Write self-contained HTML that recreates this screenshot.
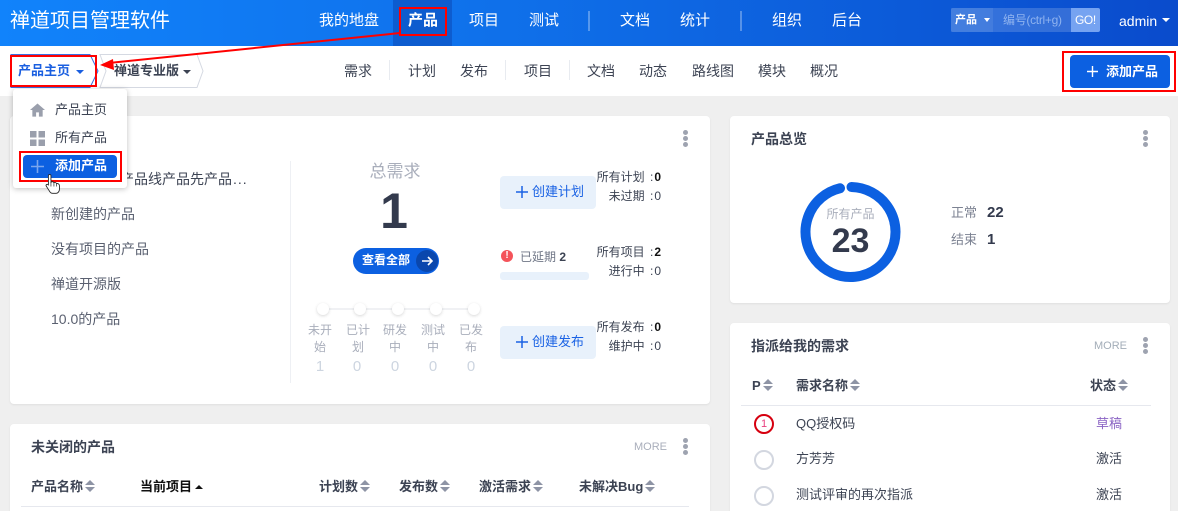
<!DOCTYPE html>
<html lang="zh">
<head>
<meta charset="utf-8">
<title>禅道项目管理软件</title>
<style>
html,body{margin:0;padding:0;width:1178px;height:511px;overflow:hidden}
body{position:relative;background:#efefef;font-family:"Liberation Sans","Noto Sans CJK SC",sans-serif;font-size:13px;color:#3c4353}
.a,.t{position:absolute}
.t{white-space:nowrap;line-height:20px;height:20px}
.c{text-align:center}
.r{text-align:right}
.card{position:absolute;background:#fff;border-radius:4px;box-shadow:0 1px 2px rgba(0,0,0,.07)}
.nav{color:#fff;font-size:15px}
.sub{color:#3c4353;font-size:14px}
.sep{position:absolute;width:1px;background:#e8ebf0}
.hsep{position:absolute;width:2px;height:20px;background:rgba(255,255,255,.3);top:11px}
.dots{position:absolute;width:4px;height:16px}
.dots i{display:block;width:5px;height:5px;border-radius:50%;background:#9ea3b0;margin-bottom:1px}
.rb{position:absolute;border:2px solid #f00;box-sizing:border-box}
.b{font-weight:bold}
.sort{display:inline-block;width:10px;height:12px;position:relative;vertical-align:-1px;margin-left:2px}
.sort:before{content:"";position:absolute;left:0;top:0;border-left:5px solid transparent;border-right:5px solid transparent;border-bottom:5px solid #8e94a5}
.sort:after{content:"";position:absolute;left:0;bottom:0;border-left:5px solid transparent;border-right:5px solid transparent;border-top:5px solid #8e94a5}
.gray{color:#a9aebb}
.light{color:#cdd5e0}
.btn{position:absolute;background:#e8f1fb;border-radius:4px;height:33px;width:96px;left:500px}
.btxt{position:absolute;color:#1a62e4;font-size:13px;line-height:20px;white-space:nowrap;left:532px}
.pc{position:absolute;width:16px;height:16px;border:2px solid #d3d7e0;border-radius:50%;left:754px}
.dot{position:absolute;width:12px;height:12px;border-radius:50%;background:#fff;box-shadow:0 1px 3px rgba(0,0,0,.16);top:303px}
.left{font-size:14px;color:#5a6070}
.st{left:580px;width:81px;font-size:12px;color:#3c4353;word-spacing:2px}
</style>
</head>
<body>
<!-- header -->
<div class="a" style="left:0;top:0;width:1178px;height:46px;background:linear-gradient(90deg,#1183fb 0%,#0f6fe9 45%,#0a4bcc 100%)"></div>
<div class="a" style="left:393px;top:0;width:59px;height:46px;background:#0d5ccf"></div>
<div class="t" style="left:10px;top:8px;font-size:20px;line-height:26px;height:26px;color:#fff">禅道项目管理软件</div>
<div class="t nav" style="left:319px;top:11px">我的地盘</div>
<div class="t nav b" style="left:408px;top:11px">产品</div>
<div class="t nav" style="left:469px;top:11px">项目</div>
<div class="t nav" style="left:529px;top:11px">测试</div>
<div class="hsep" style="left:588px"></div>
<div class="t nav" style="left:620px;top:11px">文档</div>
<div class="t nav" style="left:680px;top:11px">统计</div>
<div class="hsep" style="left:740px"></div>
<div class="t nav" style="left:772px;top:11px">组织</div>
<div class="t nav" style="left:832px;top:11px">后台</div>
<div class="a" style="left:951px;top:8px;width:120px;height:24px;background:rgba(255,255,255,.17);border-radius:2px 0 0 2px"></div>
<div class="a" style="left:1071px;top:8px;width:29px;height:24px;background:#76a3f1;border-radius:0 2px 2px 0"></div>
<div class="a" style="left:951px;top:8px;width:42px;height:24px;background:rgba(255,255,255,.08)"></div>
<div class="t b" style="left:955px;top:10px;font-size:11px;color:#fff">产品</div>
<div class="a" style="left:984px;top:18px;border-left:3.5px solid transparent;border-right:3.5px solid transparent;border-top:4px solid #fff"></div>
<div class="t" style="left:1003px;top:10px;font-size:12px;color:#8fb3ef;letter-spacing:-.3px">编号(ctrl+g)</div>
<div class="t" style="left:1075px;top:10px;font-size:12px;color:#fff;letter-spacing:-.4px">GO!</div>
<div class="t" style="left:1119px;top:11px;font-size:14px;color:#fff">admin</div>
<div class="a" style="left:1162px;top:18px;border-left:4px solid transparent;border-right:4px solid transparent;border-top:4px solid #fff"></div>

<!-- subnav -->
<div class="a" style="left:0;top:46px;width:1178px;height:50px;background:#fff"></div>
<svg class="a" style="left:10px;top:54px" width="200" height="35">
<path d="M1 .5H80L88 17 80 33.500H1z" fill="#fff" stroke="#3a6fe0"/>
<path d="M90 .5H187L193 17 187 33.500H90L96 17z" fill="#fff" stroke="#d5d9e2"/>
</svg>
<div class="t b" style="left:18px;top:61px;font-size:13px;color:#1a5fe0">产品主页</div>
<div class="a" style="left:76px;top:70px;border-left:4px solid transparent;border-right:4px solid transparent;border-top:4px solid #1a5fe0"></div>
<div class="t b" style="left:114px;top:61px;font-size:13px;color:#3c4353">禅道专业版</div>
<div class="a" style="left:183px;top:70px;border-left:4px solid transparent;border-right:4px solid transparent;border-top:4px solid #3c4353"></div>
<div class="t sub" style="left:344px;top:61px">需求</div>
<div class="sep" style="left:389px;top:60px;height:20px"></div>
<div class="t sub" style="left:408px;top:61px">计划</div>
<div class="t sub" style="left:460px;top:61px">发布</div>
<div class="sep" style="left:505px;top:60px;height:20px"></div>
<div class="t sub" style="left:524px;top:61px">项目</div>
<div class="sep" style="left:569px;top:60px;height:20px"></div>
<div class="t sub" style="left:587px;top:61px">文档</div>
<div class="t sub" style="left:639px;top:61px">动态</div>
<div class="t sub" style="left:692px;top:61px">路线图</div>
<div class="t sub" style="left:758px;top:61px">模块</div>
<div class="t sub" style="left:810px;top:61px">概况</div>
<div class="a" style="left:1070px;top:55px;width:100px;height:33px;background:#0c60e1;border-radius:4px"></div>
<svg class="a" style="left:1087px;top:66px" width="11" height="11"><path d="M5.500 0V11M0 5.500H11" stroke="#fff" stroke-width="1.400"/></svg>
<div class="t b" style="left:1106px;top:62px;font-size:13px;color:#fff">添加产品</div>

<!-- left card -->
<div class="card" style="left:10px;top:116px;width:700px;height:288px"></div>
<div class="dots" style="left:683px;top:130px"><i></i><i></i><i></i></div>
<div class="t" style="left:120px;top:169px;font-size:14px;color:#3c4353">产品线产品先产品<span style="letter-spacing:1px;margin-left:1px">...</span></div>
<div class="t left" style="left:51px;top:204px">新创建的产品</div>
<div class="t left" style="left:51px;top:239px">没有项目的产品</div>
<div class="t left" style="left:51px;top:274px">禅道开源版</div>
<div class="t left" style="left:51px;top:309px">10.0的产品</div>
<div class="a" style="left:290px;top:161px;width:1px;height:222px;background:#eef0f4"></div>

<div class="t c gray" style="left:350px;top:162px;width:90px;font-size:17px">总需求</div>
<div class="t c b" style="left:349px;top:186px;width:90px;font-size:50px;line-height:50px;height:50px;color:#333a4d">1</div>
<div class="a" style="left:353px;top:248px;width:86px;height:26px;border-radius:13px;background:#0c60e1"></div>
<div class="a" style="left:416px;top:250px;width:22px;height:22px;border-radius:50%;background:#0a47ad"></div>
<svg class="a" style="left:420px;top:254px" width="14" height="14" viewBox="0 0 14 14"><path d="M2 7H12M8 3L12 7 8 11" fill="none" stroke="#fff" stroke-width="1.600"/></svg>
<div class="t b" style="left:362px;top:250px;font-size:12px;color:#fff">查看全部</div>

<div class="a" style="left:323px;top:308px;width:150px;height:2px;background:#f0f1f4"></div>
<div class="dot" style="left:317px"></div>
<div class="dot" style="left:354px"></div>
<div class="dot" style="left:392px"></div>
<div class="dot" style="left:430px"></div>
<div class="dot" style="left:468px"></div>
<div class="a c gray" style="left:304px;top:322px;width:32px;font-size:12px;line-height:17px">未开<br>始</div>
<div class="a c gray" style="left:342px;top:322px;width:32px;font-size:12px;line-height:17px">已计<br>划</div>
<div class="a c gray" style="left:379px;top:322px;width:32px;font-size:12px;line-height:17px">研发<br>中</div>
<div class="a c gray" style="left:417px;top:322px;width:32px;font-size:12px;line-height:17px">测试<br>中</div>
<div class="a c gray" style="left:455px;top:322px;width:32px;font-size:12px;line-height:17px">已发<br>布</div>
<div class="t c light" style="left:304px;top:357px;width:32px;font-size:15px">1</div>
<div class="t c light" style="left:341px;top:357px;width:32px;font-size:15px">0</div>
<div class="t c light" style="left:379px;top:357px;width:32px;font-size:15px">0</div>
<div class="t c light" style="left:417px;top:357px;width:32px;font-size:15px">0</div>
<div class="t c light" style="left:455px;top:357px;width:32px;font-size:15px">0</div>

<div class="btn" style="top:176px"></div>
<svg class="a" style="left:516px;top:186px" width="12" height="12"><path d="M6 0V12M0 6H12" stroke="#1a62e4" stroke-width="1.500"/></svg>
<div class="btxt" style="top:182px">创建计划</div>
<div class="btn" style="top:326px"></div>
<svg class="a" style="left:516px;top:336px" width="12" height="12"><path d="M6 0V12M0 6H12" stroke="#1a62e4" stroke-width="1.500"/></svg>
<div class="btxt" style="top:332px">创建发布</div>
<div class="a" style="left:501px;top:250px;width:12px;height:12px;border-radius:50%;background:#f4535a;color:#fff;font-size:10px;line-height:12px;text-align:center;font-weight:bold">!</div>
<div class="t" style="left:520px;top:247px;font-size:12px;color:#6f7686">已延期 <span class="b" style="color:#3c4353">2</span></div>
<div class="a" style="left:500px;top:272px;width:89px;height:8px;background:#e8f1fb;border-radius:3px"></div>

<div class="t r st" style="top:167px">所有计划 :<span class="b" style="color:#111;margin-left:1px">0</span></div>
<div class="t r st" style="top:186px">未过期 :<span style="margin-left:1px">0</span></div>
<div class="t r st" style="top:242px">所有项目 :<span class="b" style="color:#111;margin-left:1px">2</span></div>
<div class="t r st" style="top:261px">进行中 :<span style="margin-left:1px">0</span></div>
<div class="t r st" style="top:317px">所有发布 :<span class="b" style="color:#111;margin-left:1px">0</span></div>
<div class="t r st" style="top:336px">维护中 :<span style="margin-left:1px">0</span></div>

<!-- bottom left card -->
<div class="card" style="left:10px;top:424px;width:700px;height:100px"></div>
<div class="t b" style="left:31px;top:437px;font-size:14px;color:#3c4353">未关闭的产品</div>
<div class="t gray" style="left:634px;top:437px;font-size:11px">MORE</div>
<div class="dots" style="left:683px;top:438px"><i></i><i></i><i></i></div>
<div class="t b" style="left:31px;top:477px">产品名称<span class="sort"></span></div>
<div class="t b" style="left:140px;top:477px;color:#111">当前项目<span style="display:inline-block;margin-left:3px;vertical-align:2px;border-left:4px solid transparent;border-right:4px solid transparent;border-bottom:4px solid #111"></span></div>
<div class="t b" style="left:319px;top:477px">计划数<span class="sort"></span></div>
<div class="t b" style="left:399px;top:477px">发布数<span class="sort"></span></div>
<div class="t b" style="left:479px;top:477px">激活需求<span class="sort"></span></div>
<div class="t b" style="left:579px;top:477px">未解决Bug<span class="sort"></span></div>
<div class="a" style="left:21px;top:506px;width:668px;height:1px;background:#e6e8ee"></div>

<!-- right top card -->
<div class="card" style="left:730px;top:116px;width:440px;height:187px"></div>
<div class="t b" style="left:751px;top:129px;font-size:14px;color:#3c4353">产品总览</div>
<div class="dots" style="left:1143px;top:130px"><i></i><i></i><i></i></div>
<svg class="a" style="left:800px;top:181px" width="102" height="102" viewBox="0 0 102 102">
<path d="M51.500 6.010A45 45 0 1 1 40 7.240" fill="none" stroke="#0c60e1" stroke-width="10" stroke-linecap="round"/>
</svg>
<div class="t c gray" style="left:800px;top:204px;width:101px;font-size:12px">所有产品</div>
<div class="t c b" style="left:800px;top:221px;width:101px;font-size:34px;line-height:40px;height:40px;color:#333a4d">23</div>
<div class="t" style="left:951px;top:203px;color:#7c8292">正常</div>
<div class="t b" style="left:987px;top:203px;font-size:15px;color:#333a4d">22</div>
<div class="t" style="left:951px;top:230px;color:#7c8292">结束</div>
<div class="t b" style="left:987px;top:230px;font-size:15px;color:#333a4d">1</div>

<!-- right bottom card -->
<div class="card" style="left:730px;top:323px;width:440px;height:200px"></div>
<div class="t b" style="left:751px;top:336px;font-size:14px;color:#3c4353">指派给我的需求</div>
<div class="t" style="left:1094px;top:336px;font-size:11px;color:#a3adb8">MORE</div>
<div class="dots" style="left:1143px;top:337px"><i></i><i></i><i></i></div>
<div class="t b" style="left:752px;top:376px">P<span class="sort"></span></div>
<div class="t b" style="left:796px;top:376px">需求名称<span class="sort"></span></div>
<div class="t b" style="left:1090px;top:376px">状态<span class="sort"></span></div>
<div class="a" style="left:741px;top:405px;width:410px;height:1px;background:#e6e8ee"></div>
<div class="a" style="left:754px;top:414px;width:16px;height:16px;border:2px solid #d6000f;border-radius:50%;color:#e8407f;font-size:11px;line-height:16px;text-align:center">1</div>
<div class="t" style="left:796px;top:414px;font-size:13px">QQ授权码</div>
<div class="t" style="left:1096px;top:414px;color:#8a63c4">草稿</div>
<div class="pc" style="top:450px"></div>
<div class="t" style="left:796px;top:449px;font-size:13px">方芳芳</div>
<div class="t" style="left:1096px;top:449px">激活</div>
<div class="pc" style="top:486px"></div>
<div class="t" style="left:796px;top:485px;font-size:13px">测试评审的再次指派</div>
<div class="t" style="left:1096px;top:485px">激活</div>

<!-- dropdown -->
<div class="a" style="left:13px;top:89px;width:114px;height:99px;background:#fff;border-radius:3px;box-shadow:0 1px 6px rgba(0,0,0,.25)"></div>
<svg class="a" style="left:30px;top:103px" width="15" height="14" viewBox="0 0 16 14"><path d="M8 0L0 7H2.500V14H6.500V9.500H9.500V14H13.500V7H16z" fill="#9a9fac"/></svg>
<svg class="a" style="left:30px;top:131px" width="15" height="15"><path d="M0 0H6.500V6.500H0zM8.500 0H15V6.500H8.500zM0 8.500H6.500V15H0zM8.500 8.500H15V15H8.500z" fill="#9a9fac"/></svg>
<div class="t" style="left:55px;top:100px;font-size:13px">产品主页</div>
<div class="t" style="left:55px;top:128px;font-size:13px">所有产品</div>
<div class="a" style="left:23px;top:155px;width:94px;height:23px;background:#0c60e1;border-radius:4px"></div>
<svg class="a" style="left:31px;top:160px" width="13" height="13"><path d="M6.500 0V13M0 6.500H13" stroke="#7aa6ee" stroke-width="1.600"/></svg>
<div class="t b" style="left:55px;top:156px;font-size:13px;color:#fff">添加产品</div>

<!-- annotations -->
<div class="rb" style="left:399px;top:7px;width:48px;height:29px"></div>
<div class="rb" style="left:10px;top:55px;width:87px;height:32px"></div>
<div class="rb" style="left:19px;top:151px;width:103px;height:31px"></div>
<div class="rb" style="left:1062px;top:51px;width:114px;height:41px"></div>
<svg class="a" style="left:95px;top:30px" width="310" height="45">
<path d="M305 3L14 33" stroke="#f00" stroke-width="2" fill="none"/>
<path d="M5 35L18 29 19 40z" fill="#f00"/>
</svg>
<svg class="a" style="left:45px;top:173px" width="17" height="22" viewBox="0 0 20 24">
<path d="M4 2C4 .5 7 .5 7 2V10C8 9 10 9 10.500 10.500 11.500 10 13 10 13.500 11.500 15 11 17 12 17 14V18C17 21 15 23 13 23H9C7 23 6 22 5 20L1.500 14.500C.5 13 2.500 11.500 4 13z" fill="#fff" stroke="#222" stroke-width="1"/>
<path d="M7 10V15M10.500 11V15M13.500 12V15" stroke="#222" stroke-width=".8"/>
</svg>
</body>
</html>
